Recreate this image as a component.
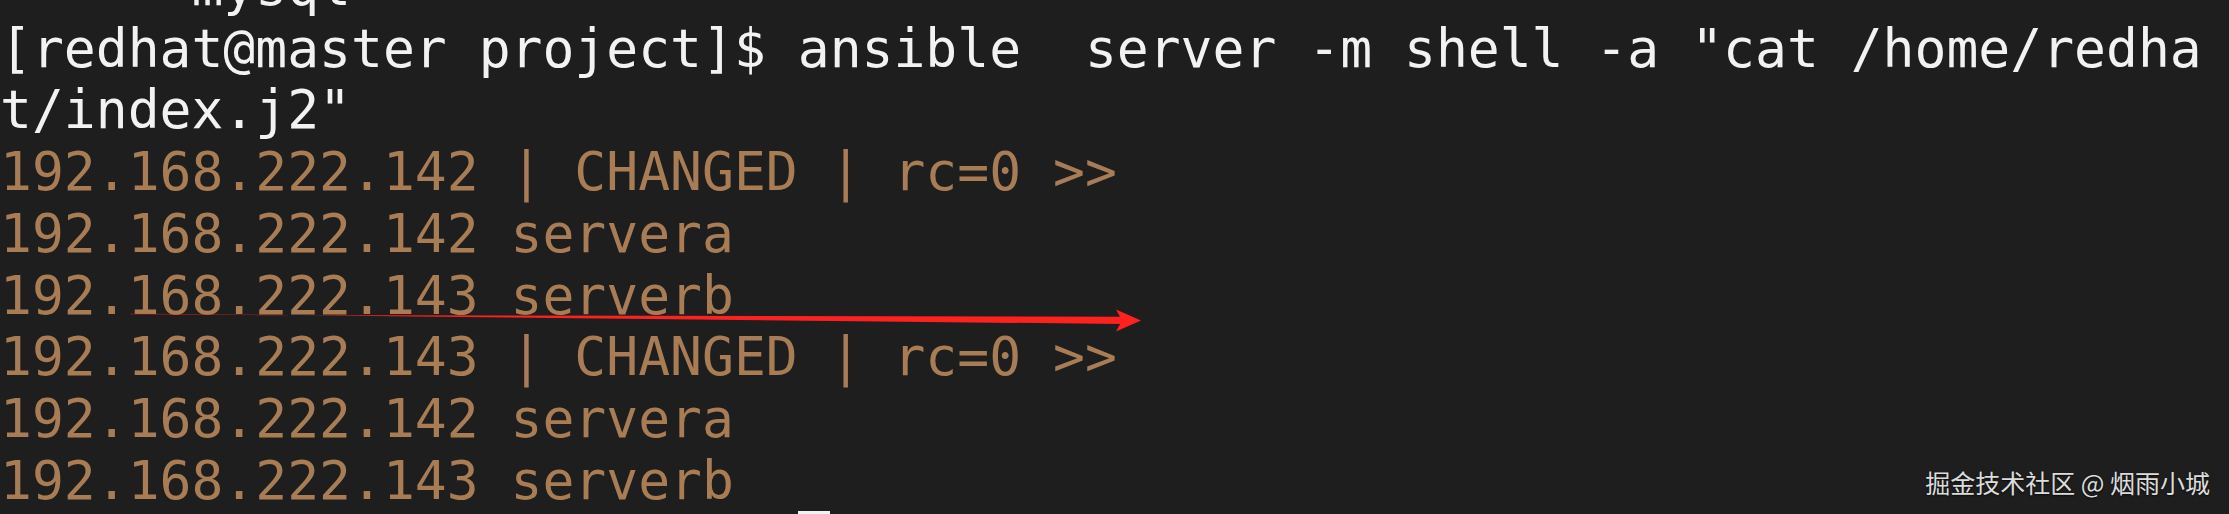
import React from 'react';

const white = 'text-[#f2f2f2]';
const brown = 'text-[#a87d55]';

const lines: { text: string; color: string }[] = [
  { text: '      mysql', color: white },
  { text: '[redhat@master project]$ ansible  server -m shell -a "cat /home/redha', color: white },
  { text: 't/index.j2"', color: white },
  { text: '192.168.222.142 | CHANGED | rc=0 >>', color: brown },
  { text: '192.168.222.142 servera', color: brown },
  { text: '192.168.222.143 serverb', color: brown },
  { text: '192.168.222.143 | CHANGED | rc=0 >>', color: brown },
  { text: '192.168.222.142 servera', color: brown },
  { text: '192.168.222.143 serverb', color: brown },
];

function Arrow() {
  return (
    <svg className="absolute inset-0 pointer-events-none" width="2229" height="514" viewBox="0 0 2229 514">
      <defs>
        <linearGradient id="fade" x1="0" x2="1" y1="0" y2="0">
          <stop offset="0" stopColor="#ff2020" stopOpacity="0.35" />
          <stop offset="0.15" stopColor="#ff2020" stopOpacity="1" />
          <stop offset="1" stopColor="#ff2020" stopOpacity="1" />
        </linearGradient>
      </defs>
      {/* tapered stroke, thin at the start */}
      <polygon points="130,313.4 130,314.6 1122,316.8 1122,324" fill="url(#fade)" />
      <polygon points="1116,309.5 1141,320.5 1116,331.5 1122,320.5" fill="#ff2020" />
    </svg>
  );
}

export default function App() {
  return (
    <div className="relative w-full h-[514px] overflow-hidden bg-[#1e1e1e]">
      <div className="-mt-[44px] font-['DejaVu_Sans_Mono',monospace] text-[53px] leading-[61.7px] whitespace-pre">
        {lines.map((line, i) => (
          <div key={i} className={line.color}>
            {line.text}
          </div>
        ))}
        {/* next prompt, only the cursor top peeks in */}
        <div className={white}>
          {'[redhat@master project]$ '}
          <span className="inline-block w-[32px] h-[52px] bg-[#f2f2f2] align-top" />
        </div>
      </div>

      <Arrow />

      <div className="absolute right-[19px] top-[470px] font-['Noto_Sans_CJK_SC',sans-serif] text-[25px] leading-[25px] text-[#dcdcdc] [text-shadow:0_1px_2px_rgba(0,0,0,0.7)] whitespace-nowrap">
        掘金技术社区 @ 烟雨小城
      </div>
    </div>
  );
}
